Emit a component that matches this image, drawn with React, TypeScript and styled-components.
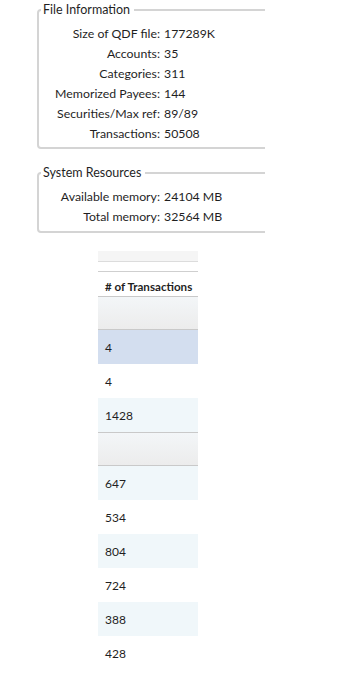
import styled, { createGlobalStyle, css } from "styled-components";

const GlobalStyle = createGlobalStyle`
  html, body {
    margin: 0;
    padding: 0;
    background: #ffffff;
  }
  body {
    font-family: "Lato", "Noto Sans", "DejaVu Sans", sans-serif;
    font-size: 12px;
    color: #1f1f1f;
  }
`;

const Page = styled.div`
  width: 343px;
  height: 673px;
  overflow: hidden;
  position: relative;
`;

const Panels = styled.div`
  width: 265px;
  overflow: hidden;
  padding-top: 2px;
  display: flex;
  flex-direction: column;
  gap: 16px;
`;

const GroupBox = styled.fieldset<{ $bottom: number }>`
  margin: 0 0 0 37px;
  padding: 5px 0 ${({ $bottom }) => $bottom}px 1px;
  width: 300px;
  border: 2px solid #d4d4d4;
  border-radius: 4px;
  min-width: 0;
`;

const Legend = styled.legend`
  margin-left: 1px;
  padding: 0 4px 0 2px;
  line-height: 16px;
  font-size: 12.5px;
  color: #1f1f1f;
`;

const InfoGrid = styled.div`
  display: grid;
  grid-template-columns: 120px auto;
  column-gap: 4px;
  grid-auto-rows: 20px;
  align-items: center;
  line-height: 16px;
  font-size: 12.3px;
  padding-top: 1px;
`;

const Label = styled.span`
  text-align: right;
  white-space: nowrap;
`;

const Value = styled.span`
  white-space: nowrap;
`;

const Table = styled.div`
  margin: 18px 0 0 98px;
  width: 100px;
  display: flex;
  flex-direction: column;
`;

const TopBand = styled.div`
  height: 10px;
  background: #f5f5f5;
  border-bottom: 1px solid #dcdcdc;
`;

const Spacer = styled.div`
  height: 9px;
  border-bottom: 1px solid #cfcfcf;
`;

const HeaderCell = styled.div`
  height: 24px;
  padding: 4px 0 0 7px;
  box-sizing: border-box;
  display: flex;
  align-items: center;
  font-weight: 700;
  font-size: 11.6px;
  white-space: nowrap;
  overflow: hidden;
`;

type Kind = "group" | "selected" | "alt" | "plain";

const Row = styled.div<{ $kind: Kind }>`
  height: 34px;
  box-sizing: border-box;
  padding-left: 7px;
  display: flex;
  align-items: center;
  font-size: 12px;
  ${({ $kind }) =>
    $kind === "group"
      ? css`
          background: linear-gradient(#f3f6f8, #ececec);
          border-top: 1px solid #c9c9c9;
          border-bottom: 1px solid #c9c9c9;
        `
      : $kind === "selected"
      ? css`
          background: #d3deef;
        `
      : $kind === "alt"
      ? css`
          background: #f0f7fa;
        `
      : css`
          background: #ffffff;
        `}
`;

const fileInfo = [
  ["Size of QDF file:", "177289K"],
  ["Accounts:", "35"],
  ["Categories:", "311"],
  ["Memorized Payees:", "144"],
  ["Securities/Max ref:", "89/89"],
  ["Transactions:", "50508"],
];

const systemInfo = [
  ["Available memory:", "24104 MB"],
  ["Total memory:", "32564 MB"],
];

const rows: { value: string; kind: Kind }[] = [
  { value: "", kind: "group" },
  { value: "4", kind: "selected" },
  { value: "4", kind: "plain" },
  { value: "1428", kind: "alt" },
  { value: "", kind: "group" },
  { value: "647", kind: "alt" },
  { value: "534", kind: "plain" },
  { value: "804", kind: "alt" },
  { value: "724", kind: "plain" },
  { value: "388", kind: "alt" },
  { value: "428", kind: "plain" },
];

function InfoRows({ items }: { items: string[][] }) {
  return (
    <InfoGrid>
      {items.map(([label, value]) => [
        <Label key={label}>{label}</Label>,
        <Value key={label + "-v"}>{value}</Value>,
      ])}
    </InfoGrid>
  );
}

export default function App() {
  return (
    <Page>
      <GlobalStyle />
      <Panels>
        <GroupBox $bottom={3}>
          <Legend>File Information</Legend>
          <InfoRows items={fileInfo} />
        </GroupBox>
        <GroupBox $bottom={4}>
          <Legend>System Resources</Legend>
          <InfoRows items={systemInfo} />
        </GroupBox>
      </Panels>
      <Table>
        <TopBand />
        <Spacer />
        <HeaderCell># of Transactions</HeaderCell>
        {rows.map((r, i) => (
          <Row key={i} $kind={r.kind}>
            {r.value}
          </Row>
        ))}
      </Table>
    </Page>
  );
}
